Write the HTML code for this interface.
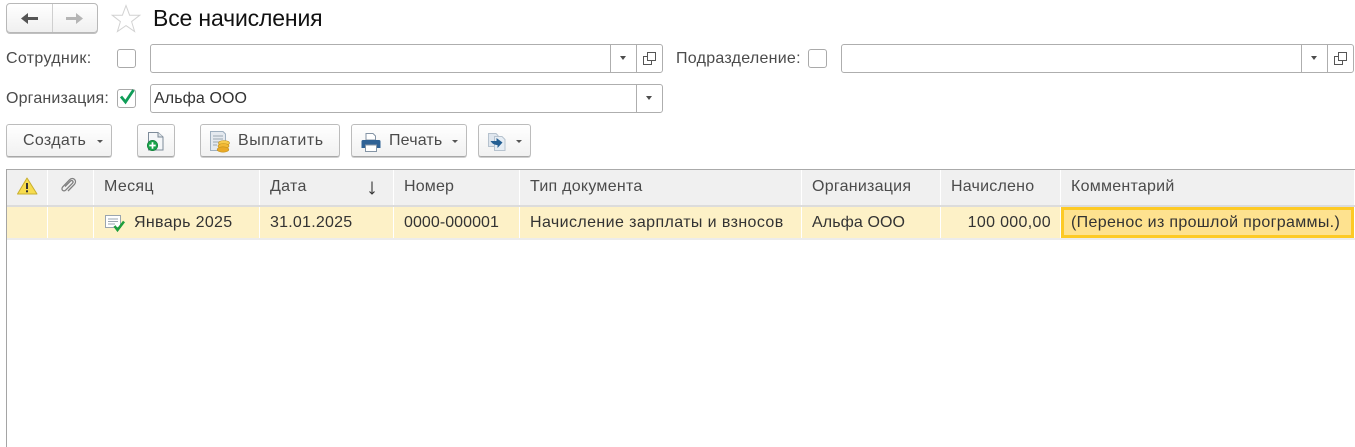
<!DOCTYPE html>
<html lang="ru"><head><meta charset="utf-8"><title>Все начисления</title>
<style>
html,body{margin:0;padding:0;background:#fff}
body{width:1355px;height:447px;position:relative;overflow:hidden;font-family:"Liberation Sans",sans-serif;font-size:16px;letter-spacing:.33px;color:#4b4b4b}
.a{position:absolute;box-sizing:border-box}
.t{position:absolute;white-space:nowrap;line-height:18px}
.btn{position:absolute;box-sizing:border-box;height:33px;top:124px;border:1px solid #bcbcbc;border-bottom-color:#a8a8a8;border-radius:3px;background:linear-gradient(#fff,#f1f1f1);box-shadow:0 1px 0 #cfcfcf}
.fld{position:absolute;box-sizing:border-box;height:29px;border:1px solid #aeaeae;border-radius:3px;background:#fff}
.cb{position:absolute;box-sizing:border-box;width:19px;height:19px;border:1px solid #aaa;border-radius:3px;background:#fff}
.sep{position:absolute;top:0;bottom:0;width:1px;background:#aeaeae}
.tri{position:absolute;width:0;height:0;border-left:3.500px solid transparent;border-right:3.500px solid transparent;border-top:4px solid #4d4d4d}
.tris{position:absolute;width:0;height:0;border-left:3px solid transparent;border-right:3px solid transparent;border-top:3px solid #555}
.h{position:absolute;top:170px;height:35px;background:#f0f0f0}
.r{position:absolute;top:207px;height:31px;background:#fdf1c7}
.ht{position:absolute;top:178px;line-height:18px;color:#4b4b4b;white-space:nowrap}
.rt{position:absolute;top:214px;line-height:18px;color:#333;white-space:nowrap}
svg{position:absolute;overflow:visible}
</style></head><body>

<!-- nav -->
<div class="a" style="left:6px;top:3px;width:92px;height:30px;border:1px solid #b8b8b8;border-radius:4px;background:linear-gradient(#fff,#f0f0f0);box-shadow:0 1px 0 #c0c0c0"></div>
<div class="a" style="left:52px;top:4px;width:1px;height:28px;background:#cfcfcf"></div>
<svg style="left:20px;top:12px" width="20" height="14"><path d="M1 6.500 L8 1 V5 H18 V8 H8 V12 Z" fill="#555"/></svg>
<svg style="left:64px;top:12px" width="20" height="14"><path d="M19 6.500 L12 1 V5 H2 V8 H12 V12 Z" fill="#b5b5b5"/></svg>
<svg style="left:111px;top:4px" width="30" height="29"><path d="M15 1.500 L18.600 11.200 H28.800 L20.600 17.600 L23.600 27.500 L15 21.600 L6.400 27.500 L9.400 17.600 L1.200 11.200 H11.400 Z" fill="#fff" stroke="#d2d2d2" stroke-width="1"/></svg>
<div class="t" style="left:153px;top:5px;font-size:23px;letter-spacing:-.15px;line-height:26px;color:#111">Все начисления</div>

<!-- filter row 1 -->
<div class="t" style="left:6px;top:50px">Сотрудник:</div>
<div class="cb" style="left:117px;top:49px"></div>
<div class="fld" style="left:150px;top:44px;width:513px"><div class="sep" style="left:459px"></div><div class="sep" style="left:485px"></div></div>
<div class="tri" style="left:620px;top:56px"></div>
<svg style="left:643px;top:52px" width="13" height="13"><path d="M4.500 .5 H12.500 V8.500 H4.500 Z M4.500 4.500 H.5 V12.500 H8.500 V8.500" fill="none" stroke="#555"/></svg>
<div class="t" style="left:676px;top:50px;letter-spacing:.27px">Подразделение:</div>
<div class="cb" style="left:808px;top:49px"></div>
<div class="fld" style="left:841px;top:44px;width:513px"><div class="sep" style="left:459px"></div><div class="sep" style="left:485px"></div></div>
<div class="tri" style="left:1311px;top:56px"></div>
<svg style="left:1334px;top:52px" width="13" height="13"><path d="M4.500 .5 H12.500 V8.500 H4.500 Z M4.500 4.500 H.5 V12.500 H8.500 V8.500" fill="none" stroke="#555"/></svg>

<!-- filter row 2 -->
<div class="t" style="left:6px;top:90px;letter-spacing:.17px">Организация:</div>
<div class="cb" style="left:117px;top:89px"></div>
<svg style="left:118px;top:87px" width="19" height="20"><path d="M3 9.500 L7.500 15 L15.500 3" fill="none" stroke="#0f9d58" stroke-width="2.800"/></svg>
<div class="fld" style="left:150px;top:84px;width:513px"><div class="sep" style="left:485px"></div></div>
<div class="t" style="left:154px;top:90px;color:#333;letter-spacing:.1px">Альфа ООО</div>
<div class="tri" style="left:646px;top:96px"></div>

<!-- toolbar -->
<div class="btn" style="left:6px;width:106px"></div>
<div class="t" style="left:23px;top:132px">Создать</div>
<div class="tris" style="left:97px;top:140px"></div>

<div class="btn" style="left:137px;width:38px"></div>
<svg style="left:146px;top:130px" width="20" height="22"><path d="M2.500 2.500 H12 L17 7 V20 H2.500 Z" fill="#f4f6f8" stroke="#7d8b99"/><path d="M12 2.500 V7 H17" fill="#dde3e8" stroke="#7d8b99"/><circle cx="6.500" cy="15.500" r="5.200" fill="#18a34a" stroke="#0e7a35" stroke-width=".6"/><path d="M6.500 12.300 V18.700 M3.300 15.500 H9.700" stroke="#fff" stroke-width="1.700"/></svg>

<div class="btn" style="left:200px;width:140px"></div>
<svg style="left:209px;top:131px" width="22" height="22"><path d="M1.500 .5 H14 L16.500 3 V19.500 H1.500 Z" fill="#e4e9ef" stroke="#9fb0c0"/><path d="M4 5 H14 M4 8 H14 M4 11 H10 M4 14 H8" stroke="#9aa6b2"/><ellipse cx="15" cy="12" rx="5.500" ry="2.500" fill="#f7cb4d" stroke="#c0911f" stroke-width=".6"/><ellipse cx="14.500" cy="15" rx="5.500" ry="2.500" fill="#f2b935" stroke="#c0911f" stroke-width=".6"/><ellipse cx="14" cy="18.500" rx="5.800" ry="2.700" fill="#eaa926" stroke="#c0911f" stroke-width=".6"/></svg>
<div class="t" style="left:238px;top:132px;letter-spacing:.55px">Выплатить</div>

<div class="btn" style="left:351px;width:116px"></div>
<svg style="left:361px;top:133px" width="20" height="20"><path d="M5 .5 H12 L14.500 3 V7 H5 Z" fill="#fff" stroke="#8494a5"/><path d="M2 7 H18 A1.500 1.500 0 0 1 19.500 8.500 V15 H16 V12 H4 V15 H.5 V8.500 A1.500 1.500 0 0 1 2 7 Z" fill="#2f6295"/><rect x="4.500" y="12" width="11" height="6.500" fill="#fff" stroke="#8494a5"/></svg>
<div class="t" style="left:389px;top:132px;letter-spacing:.17px">Печать</div>
<div class="tris" style="left:452px;top:140px"></div>

<div class="btn" style="left:478px;width:53px"></div>
<svg style="left:488px;top:133px" width="20" height="19"><path d="M.5 .5 H8 L10 2.500 V13.500 H.5 Z" fill="#dfe6ee" stroke="#b6c2ce"/><path d="M6.500 3.500 H14 L17 6.500 V17.500 H6.500 Z" fill="#e6edf4" stroke="#b6c2ce"/><path d="M2.500 8 H8.500 V5 L14.500 9.500 L9.500 15 V12 C6.500 12 4.500 11 2.500 8 Z" fill="#245f93"/></svg>
<div class="tris" style="left:516px;top:140px"></div>

<!-- table frame -->
<div class="a" style="left:6px;top:169px;width:1349px;height:1px;background:#aaa"></div>
<div class="a" style="left:6px;top:169px;width:1px;height:278px;background:#a5a5a5"></div>
<div class="a" style="left:7px;top:205px;width:1348px;height:2px;background:#dcdcdc"></div>
<div class="a" style="left:7px;top:238px;width:1348px;height:2px;background:#ececec"></div>

<!-- header cells -->
<div class="h" style="left:7px;width:40px"></div>
<div class="h" style="left:48px;width:45px"></div>
<div class="h" style="left:94px;width:165px"></div>
<div class="h" style="left:260px;width:133px"></div>
<div class="h" style="left:394px;width:125px"></div>
<div class="h" style="left:520px;width:281px"></div>
<div class="h" style="left:802px;width:138px"></div>
<div class="h" style="left:941px;width:119px"></div>
<div class="h" style="left:1061px;width:293px"></div>

<!-- row cells -->
<div class="r" style="left:7px;width:40px"></div>
<div class="r" style="left:48px;width:45px"></div>
<div class="r" style="left:94px;width:165px"></div>
<div class="r" style="left:260px;width:133px"></div>
<div class="r" style="left:394px;width:125px"></div>
<div class="r" style="left:520px;width:281px"></div>
<div class="r" style="left:802px;width:138px"></div>
<div class="r" style="left:941px;width:119px"></div>
<div class="a" style="left:1061px;top:207px;width:293px;height:31px;background:#fee28f;border:3px solid #fdca25"></div>

<!-- header icons -->
<svg style="left:17px;top:177px" width="21" height="18"><path d="M10 1 L20 17 H.5 Z" fill="#f7dc4f" stroke="#c8b030" stroke-linejoin="round"/><path d="M10 6 V12" stroke="#333" stroke-width="2"/><rect x="9" y="13.300" width="2" height="2" fill="#333"/></svg>
<svg style="left:60px;top:178px" width="16" height="16"><path d="M5 8.500 L10.500 3 C12 1.500 14 3.500 12.500 5.200 L6 11.800 C3.500 14.500 .5 11.500 2.800 8.800 L9.500 1.800 C13 -1.500 17.500 2.500 14.500 6.300 L8 13" fill="none" stroke="#808080" stroke-width="1.300"/></svg>

<!-- header text -->
<div class="ht" style="left:104px">Месяц</div>
<div class="ht" style="left:270px">Дата</div>
<svg style="left:367px;top:181px" width="10" height="14"><path d="M5 .5 V13 M2.500 10.500 L5 13 L7.500 10.500" fill="none" stroke="#333" stroke-width="1.100"/></svg>
<div class="ht" style="left:404px;letter-spacing:.17px">Номер</div>
<div class="ht" style="left:530px;letter-spacing:.26px">Тип документа</div>
<div class="ht" style="left:812px;letter-spacing:.25px">Организация</div>
<div class="ht" style="left:951px;letter-spacing:.22px">Начислено</div>
<div class="ht" style="left:1071px;letter-spacing:.25px">Комментарий</div>

<!-- row -->
<svg style="left:105px;top:215px" width="20" height="18"><rect x=".5" y=".5" width="15" height="12" fill="#fff" stroke="#9aa5af"/><path d="M3 4 H13 M3 6.500 H13 M3 9 H10" stroke="#9aa5af"/><path d="M9.500 11 L12.500 15 L19 6.500" fill="none" stroke="#1c9e3c" stroke-width="2.500"/></svg>
<div class="rt" style="left:134px">Январь 2025</div>
<div class="rt" style="left:270px;letter-spacing:.23px">31.01.2025</div>
<div class="rt" style="left:404px;letter-spacing:.06px">0000-000001</div>
<div class="rt" style="left:530px;letter-spacing:.4px">Начисление зарплаты и взносов</div>
<div class="rt" style="left:812px;letter-spacing:.1px">Альфа ООО</div>
<div class="rt" style="right:304px">100 000,00</div>
<div class="rt" style="left:1071px">(Перенос из прошлой программы.)</div>
</body></html>
